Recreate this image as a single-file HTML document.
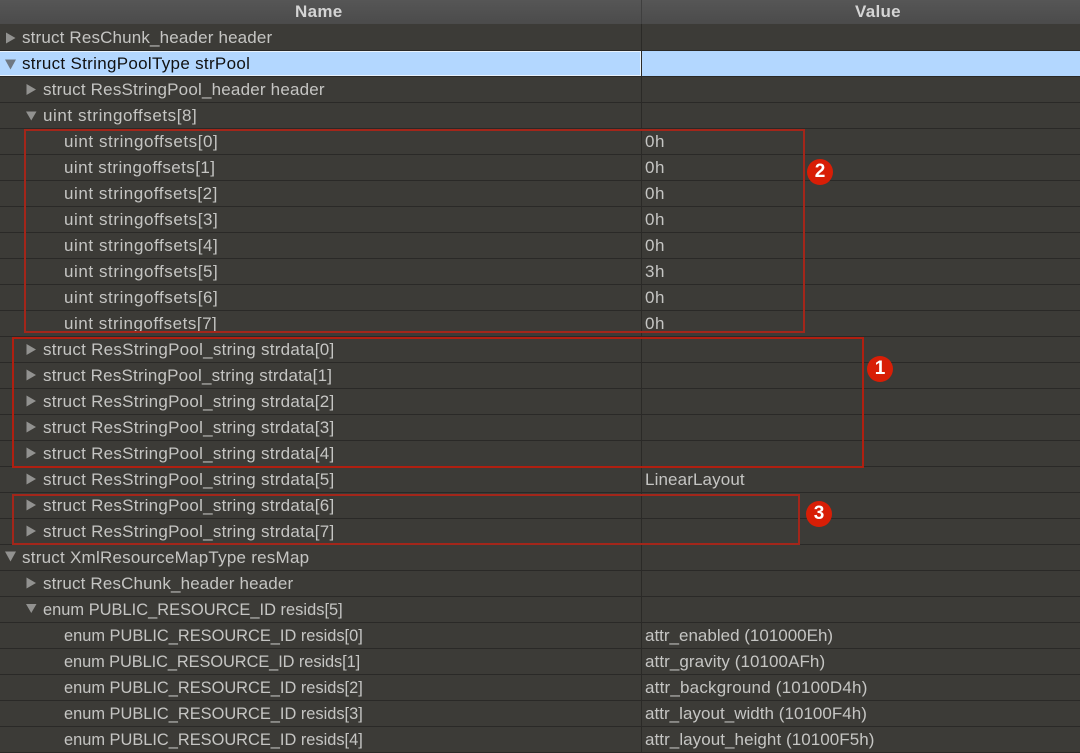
<!DOCTYPE html>
<html><head><meta charset="utf-8"><style>
html,body{margin:0;padding:0;background:#3c3b37}
#p{position:relative;width:1080px;height:753px;overflow:hidden;background:#3c3b37;font-family:"Liberation Sans",sans-serif;font-size:17px;color:#c5c5c3}
.hd{position:absolute;left:0;top:0;width:1080px;height:24px;background:linear-gradient(#565656,#4b4b4b)}
.hd b{position:absolute;top:2px;line-height:20px;font-size:17px;color:#d4d4d4}
.vl{position:absolute;left:641px;top:24px;width:1px;height:729px;background:#2b2a27}
.hl{position:absolute;left:0;width:1080px;height:1px;background:#2a2927}
.t{position:absolute;white-space:nowrap;line-height:26px;height:26px}
.e{font-size:16.4px}
.sel{position:absolute;left:0;top:51px;width:1080px;height:25px;background:#b3d7ff}
.r{position:absolute;border:2px solid #a3261a;box-sizing:border-box}
.c{position:absolute;width:26px;height:26px;border-radius:50%;background:#d81e06;color:#fff;font-size:19px;font-weight:bold;text-align:center;line-height:26px}
svg{position:absolute;left:0;top:0}
</style></head><body><div id="p">
<div class="hd"><b style="left:295px;letter-spacing:.3px">Name</b><b style="left:855px;letter-spacing:.3px">Value</b><div style="position:absolute;left:641px;top:0;width:1px;height:24px;background:#3f3f3f"></div></div>
<div class="sel"></div>
<div style="position:absolute;left:0;top:51px;width:641px;height:25px;border:1px solid #e8f2fc;border-left:0;box-sizing:border-box"></div>
<div class="vl"></div>
<div class="hl" style="top:50px"></div><div class="hl" style="top:76px"></div><div class="hl" style="top:102px"></div><div class="hl" style="top:128px"></div><div class="hl" style="top:154px"></div><div class="hl" style="top:180px"></div><div class="hl" style="top:206px"></div><div class="hl" style="top:232px"></div><div class="hl" style="top:258px"></div><div class="hl" style="top:284px"></div><div class="hl" style="top:310px"></div><div class="hl" style="top:336px"></div><div class="hl" style="top:362px"></div><div class="hl" style="top:388px"></div><div class="hl" style="top:414px"></div><div class="hl" style="top:440px"></div><div class="hl" style="top:466px"></div><div class="hl" style="top:492px"></div><div class="hl" style="top:518px"></div><div class="hl" style="top:544px"></div><div class="hl" style="top:570px"></div><div class="hl" style="top:596px"></div><div class="hl" style="top:622px"></div><div class="hl" style="top:648px"></div><div class="hl" style="top:674px"></div><div class="hl" style="top:700px"></div><div class="hl" style="top:726px"></div><div class="hl" style="top:752px"></div>
<svg width="1080" height="753" fill="#929290">
<path d="M6 32.500l9.500 5.500-9.500 5.500zM26.500 84l9.500 5.500-9.500 5.500zM26.500 344l9.500 5.500-9.500 5.500zM26.500 369.500l9.500 5.500-9.500 5.500zM26.500 395.500l9.500 5.500-9.500 5.500zM26.500 421.500l9.500 5.500-9.500 5.500zM26.500 447.500l9.500 5.500-9.500 5.500zM26.500 473.500l9.500 5.500-9.500 5.500zM26.500 499.500l9.500 5.500-9.500 5.500zM26.500 525.500l9.500 5.500-9.500 5.500zM26.500 577.500l9.500 5.500-9.500 5.500z"/>
<path fill="#6f7883" d="M5 59.500h11l-5.500 10z"/>
<path d="M26 111.500h10.500l-5.250 9zM5 551.500h11l-5.500 10zM26 604h10.500l-5.250 9z"/>
</svg>
<div class="t" style="left:22px;top:25px;letter-spacing:.16px">struct ResChunk_header header</div>
<div class="t" style="left:22px;top:51px;color:#111;letter-spacing:.31px">struct StringPoolType strPool</div>
<div class="t" style="left:43px;top:77px;letter-spacing:.2px">struct ResStringPool_header header</div>
<div class="t" style="left:43px;top:103px;letter-spacing:.57px">uint stringoffsets[8]</div>
<div class="t" style="left:64px;top:129px;letter-spacing:.57px">uint stringoffsets[0]</div><div class="t" style="left:645px;top:129px;letter-spacing:.5px">0h</div>
<div class="t" style="left:64px;top:155px;letter-spacing:.43px">uint stringoffsets[1]</div><div class="t" style="left:645px;top:155px;letter-spacing:.5px">0h</div>
<div class="t" style="left:64px;top:181px;letter-spacing:.55px">uint stringoffsets[2]</div><div class="t" style="left:645px;top:181px;letter-spacing:.5px">0h</div>
<div class="t" style="left:64px;top:207px;letter-spacing:.57px">uint stringoffsets[3]</div><div class="t" style="left:645px;top:207px;letter-spacing:.5px">0h</div>
<div class="t" style="left:64px;top:233px;letter-spacing:.57px">uint stringoffsets[4]</div><div class="t" style="left:645px;top:233px;letter-spacing:.5px">0h</div>
<div class="t" style="left:64px;top:259px;letter-spacing:.57px">uint stringoffsets[5]</div><div class="t" style="left:645px;top:259px;letter-spacing:.5px">3h</div>
<div class="t" style="left:64px;top:285px;letter-spacing:.57px">uint stringoffsets[6]</div><div class="t" style="left:645px;top:285px;letter-spacing:.5px">0h</div>
<div class="t" style="left:64px;top:311px;letter-spacing:.52px">uint stringoffsets[7]</div><div class="t" style="left:645px;top:311px;letter-spacing:.5px">0h</div>
<div class="t" style="left:43px;top:337px;letter-spacing:.26px">struct ResStringPool_string strdata[0]</div>
<div class="t" style="left:43px;top:363px;letter-spacing:.2px">struct ResStringPool_string strdata[1]</div>
<div class="t" style="left:43px;top:389px;letter-spacing:.26px">struct ResStringPool_string strdata[2]</div>
<div class="t" style="left:43px;top:415px;letter-spacing:.26px">struct ResStringPool_string strdata[3]</div>
<div class="t" style="left:43px;top:441px;letter-spacing:.26px">struct ResStringPool_string strdata[4]</div>
<div class="t" style="left:43px;top:467px;letter-spacing:.26px">struct ResStringPool_string strdata[5]</div><div class="t" style="left:645px;top:467px;letter-spacing:.12px">LinearLayout</div>
<div class="t" style="left:43px;top:493px;letter-spacing:.26px">struct ResStringPool_string strdata[6]</div>
<div class="t" style="left:43px;top:519px;letter-spacing:.26px">struct ResStringPool_string strdata[7]</div>
<div class="t" style="left:22px;top:545px;letter-spacing:.24px">struct XmlResourceMapType resMap</div>
<div class="t" style="left:43px;top:571px;letter-spacing:.16px">struct ResChunk_header header</div>
<div class="t e" style="left:43px;top:597px;letter-spacing:.03px">enum PUBLIC_RESOURCE_ID resids[5]</div>
<div class="t e" style="left:64px;top:623px">enum PUBLIC_RESOURCE_ID resids[0]</div><div class="t" style="left:645px;top:623px">attr_enabled (101000Eh)</div>
<div class="t e" style="left:64px;top:649px;letter-spacing:-.08px">enum PUBLIC_RESOURCE_ID resids[1]</div><div class="t" style="left:645px;top:649px;letter-spacing:.07px">attr_gravity (10100AFh)</div>
<div class="t e" style="left:64px;top:675px">enum PUBLIC_RESOURCE_ID resids[2]</div><div class="t" style="left:645px;top:675px;letter-spacing:.2px">attr_background (10100D4h)</div>
<div class="t e" style="left:64px;top:701px">enum PUBLIC_RESOURCE_ID resids[3]</div><div class="t" style="left:645px;top:701px;letter-spacing:.03px">attr_layout_width (10100F4h)</div>
<div class="t e" style="left:64px;top:727px">enum PUBLIC_RESOURCE_ID resids[4]</div><div class="t" style="left:645px;top:727px;letter-spacing:.06px">attr_layout_height (10100F5h)</div>
<div class="r" style="left:24px;top:129px;width:781px;height:204px"></div>
<div class="r" style="left:12px;top:337px;width:852px;height:131px;border-color:#b01f10"></div>
<div class="r" style="left:12px;top:494px;width:788px;height:51px"></div>
<div class="c" style="left:807px;top:159px">2</div>
<div class="c" style="left:867px;top:356px">1</div>
<div class="c" style="left:806px;top:501px">3</div>
</div></body></html>
